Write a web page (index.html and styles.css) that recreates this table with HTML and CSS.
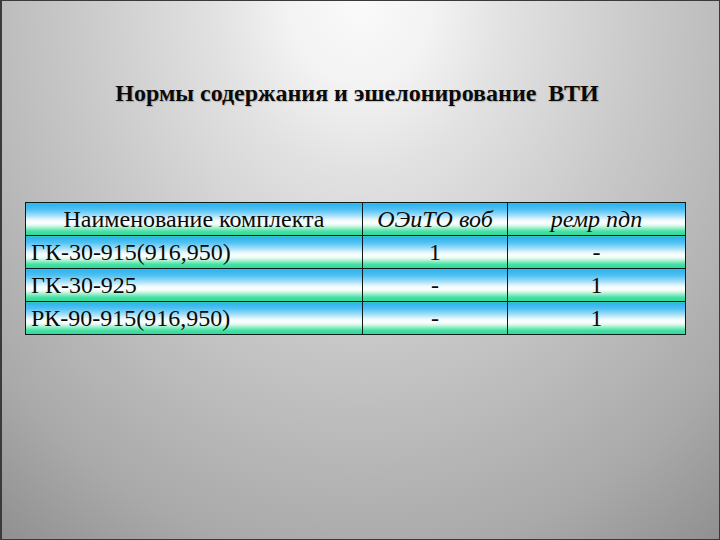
FILE: index.html
```html
<!DOCTYPE html>
<html lang="ru">
<head>
<meta charset="utf-8">
<title>Нормы содержания и эшелонирование ВТИ</title>
<link rel="stylesheet" href="styles.css">
</head>
<body>
<div class="slide">
  <h1 class="title">Нормы содержания и эшелонирование&nbsp; ВТИ</h1>
  <table class="norms">
    <colgroup>
      <col class="c-name">
      <col class="c-oei">
      <col class="c-remr">
    </colgroup>
    <thead>
      <tr>
        <th class="h-name">Наименование комплекта</th>
        <th class="h-it">ОЭиТО воб</th>
        <th class="h-it">ремр пдп</th>
      </tr>
    </thead>
    <tbody>
      <tr>
        <td class="name">ГК-30-915(916,950)</td>
        <td class="num">1</td>
        <td class="num">-</td>
      </tr>
      <tr>
        <td class="name">ГК-30-925</td>
        <td class="num">-</td>
        <td class="num">1</td>
      </tr>
      <tr>
        <td class="name">РК-90-915(916,950)</td>
        <td class="num">-</td>
        <td class="num">1</td>
      </tr>
    </tbody>
  </table>
</div>
</body>
</html>
```

FILE: styles.css
```css
html, body {
  margin: 0;
  padding: 0;
}

body {
  width: 720px;
  height: 540px;
  overflow: hidden;
  font-family: "Liberation Serif", Tinos, "Times New Roman", "Nimbus Roman", "Nimbus Roman No9 L", FreeSerif, "Noto Serif", "DejaVu Serif", serif;
  color: #0a0a0a;
}

.slide {
  box-sizing: border-box;
  width: 720px;
  height: 540px;
  border: 1px solid #3a3a3a;
  border-left-width: 2px;
  background: radial-gradient(ellipse 480px 560px at 50% 0,
      #fafafa 0%, #f3f3f3 15%, #e2e2e2 30%, #c8c8c8 60%, #a9a9a9 100%, #8c8c8c 125%);
  display: flex;
  flex-direction: column;
  align-items: flex-start;
  padding: 0 0 0 23px;
}

.title {
  align-self: stretch;
  margin: 78px 0 0 0;
  padding-right: 30px;
  font-family: inherit;
  font-size: 24px;
  line-height: 28px;
  font-weight: bold;
  text-align: center;
  text-shadow: 1px 1px 1px rgba(0, 0, 0, 0.2);
}

.norms {
  margin-top: 95px;
  border-collapse: collapse;
  width: 660px;
  table-layout: fixed;
  font-family: inherit;
  font-size: 24px;
  border: 1px solid #0c1c1c;
}

.c-name { width: 337px; }
.c-oei { width: 145px; }
.c-remr { width: 178px; }

.norms th,
.norms td {
  height: 32px;
  line-height: 32px;
  padding: 0 4px;
  box-sizing: border-box;
  border: 1px solid #0c1c1c;
  font-weight: normal;
  white-space: nowrap;
  background: linear-gradient(to bottom,
      #2cb2ee 0%, #4cc0f2 18%, #9cdcf8 36%, #e6f7fd 50%, #ffffff 60%,
      #e4fbf0 68%, #8eeec6 78%, #3fe0a0 88%, #36d89a 100%);
}

.norms th.h-name {
  text-align: center;
}

.norms th.h-it {
  font-style: italic;
  text-align: center;
}

.norms td.name {
  text-align: left;
  padding-left: 5px;
}

.norms td.num {
  text-align: center;
}
```
